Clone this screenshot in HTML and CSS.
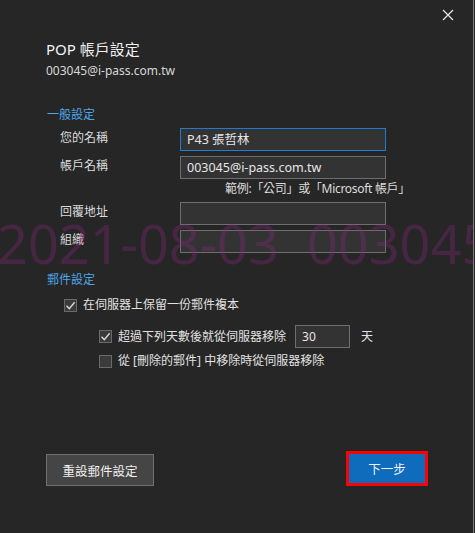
FILE: index.html
```html
<!DOCTYPE html>
<html lang="zh-Hant">
<head>
<meta charset="utf-8">
<title>POP 帳戶設定</title>
<link rel="stylesheet" href="styles.css">
</head>
<body>
<div class="dialog">
  <div class="topbar">
    <button class="close" aria-label="關閉">
      <svg width="12" height="12" viewBox="0 0 12 12"><path d="M1 1 L11 11 M11 1 L1 11" stroke="#e6e6e6" stroke-width="1.3" fill="none"/></svg>
    </button>
  </div>
  <div class="content">
    <h1 class="title">POP 帳戶設定</h1>
    <div class="subtitle">003045@i-pass.com.tw</div>

    <h2 class="section">一般設定</h2>
    <div class="form">
      <label class="lbl">您的名稱</label>
      <div class="field focused">P43 張哲林</div>
      <label class="lbl">帳戶名稱</label>
      <div class="field">003045@i-pass.com.tw</div>
      <div class="hint">範例:「公司」或「Microsoft 帳戶」</div>
      <label class="lbl">回覆地址</label>
      <div class="field"></div>
      <label class="lbl">組織</label>
      <div class="field"></div>
    </div>

    <h2 class="section section2">郵件設定</h2>
    <div class="check row1">
      <span class="box checked"><svg width="11" height="11" viewBox="0 0 11 11"><path d="M1.5 5.8 L4.3 8.6 L9.6 2.2" stroke="#d8d8d8" stroke-width="1.4" fill="none"/></svg></span>
      <span>在伺服器上保留一份郵件複本</span>
    </div>
    <div class="check row2 indent">
      <span class="box checked"><svg width="11" height="11" viewBox="0 0 11 11"><path d="M1.5 5.8 L4.3 8.6 L9.6 2.2" stroke="#d8d8d8" stroke-width="1.4" fill="none"/></svg></span>
      <span class="txt">超過下列天數後就從伺服器移除</span>
      <div class="days">30</div>
      <span class="unit">天</span>
    </div>
    <div class="check row3 indent">
      <span class="box"></span>
      <span>從 [刪除的郵件] 中移除時從伺服器移除</span>
    </div>

    <div class="buttons">
      <button class="btn secondary">重設郵件設定</button>
      <button class="btn primary">下一步</button>
    </div>
  </div>
  <div class="watermark">2021-08-03&nbsp;&nbsp;003045</div>
</div>
</body>
</html>
```
FILE: styles.css
```css
html, body {
  margin: 0;
  padding: 0;
  background: #262626;
}
body {
  font-family: "Segoe UI", "Noto Sans", "Noto Sans CJK TC", sans-serif;
  color: #e2e2e2;
  font-size: 12px;
}
.dialog {
  position: relative;
  width: 474px;
  height: 533px;
  box-sizing: border-box;
  border-right: 1px solid #7c7c7c;
  overflow: hidden;
}
.topbar {
  height: 0;
  display: flex;
  justify-content: flex-end;
}
.close {
  margin: 8px 18px 0 0;
  width: 14px;
  height: 14px;
  padding: 0;
  border: 0;
  background: transparent;
  display: flex;
  align-items: center;
  justify-content: center;
  position: relative;
  z-index: 2;
}
.content {
  padding: 39px 0 0 46px;
  display: flex;
  flex-direction: column;
}
.title {
  margin: 0;
  font-size: 15px;
  font-weight: normal;
  line-height: 20px;
  color: #f2f2f2;
}
.subtitle {
  margin-top: 3px;
  line-height: 18px;
  font-size: 12px;
  color: #d8d8d8;
}
.section {
  margin: 27px 0 0 1px;
  font-size: 12px;
  font-weight: normal;
  line-height: 16px;
  color: #4ea6ea;
}
.section2 {
  margin-top: 19px;
}
.form {
  margin-top: 5px;
  display: grid;
  grid-template-columns: 134px 206px;
  column-gap: 0;
  row-gap: 5px;
}
.lbl {
  padding: 2px 0 0 14px;
  line-height: 16px;
  color: #dcdcdc;
}
.field {
  height: 23px;
  box-sizing: border-box;
  border: 1px solid #6e6e6e;
  background: #333333;
  padding: 0 6px;
  line-height: 21px;
  color: #e6e6e6;
  font-size: 12.5px;
}
.field.focused {
  border-color: #1f7bd0;
}
.hint {
  grid-column: 1 / 3;
  justify-self: end;
  margin: -3px -24px 0 0;
  line-height: 16px;
  color: #dcdcdc;
  letter-spacing: -0.3px;
}
.check {
  display: flex;
  align-items: center;
  gap: 6px;
  line-height: 18px;
  color: #e2e2e2;
}
.row1 {
  margin: 8px 0 0 18px;
  height: 18px;
}
.row2 {
  margin-top: 11px;
  height: 23px;
}
.row3 {
  margin-top: 4px;
  height: 18px;
}
.indent {
  margin-left: 53px;
}
.box {
  width: 13px;
  height: 13px;
  box-sizing: border-box;
  border: 1px solid #6a6a6a;
  background: #3b3b3b;
  display: flex;
  align-items: center;
  justify-content: center;
  flex: none;
}
.days {
  margin-left: 3px;
  width: 55px;
  height: 23px;
  box-sizing: border-box;
  border: 1px solid #6e6e6e;
  background: #333333;
  padding: 0 6px;
  line-height: 21px;
  color: #e6e6e6;
}
.unit {
  margin-left: 5px;
}
.buttons {
  margin-top: 81px;
  display: flex;
  justify-content: space-between;
  align-items: flex-end;
  width: 382px;
}
.btn {
  font-family: inherit;
  font-size: 12.5px;
  color: #f0f0f0;
  box-sizing: border-box;
  padding: 0;
}
.secondary {
  width: 108px;
  height: 32px;
  background: #454545;
  border: 1px solid #6e6e6e;
}
.primary {
  width: 82px;
  height: 35px;
  background: #0f6cbd;
  border: 3px solid #ff0000;
}
.watermark {
  position: absolute;
  left: -3px;
  top: 208px;
  font-family: "Segoe UI", "Noto Sans", sans-serif;
  font-size: 54px;
  line-height: 70px;
  white-space: nowrap;
  color: rgba(140, 40, 130, 0.32);
  pointer-events: none;
  letter-spacing: 0;
}
```
